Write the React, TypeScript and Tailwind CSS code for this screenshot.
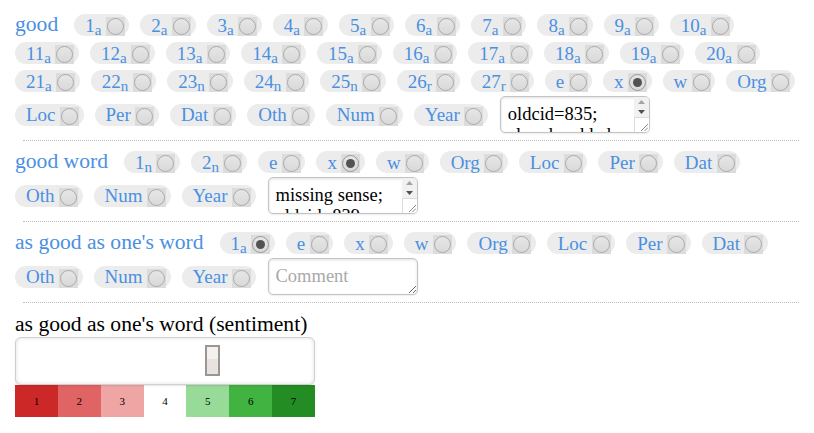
import React from "react";

const BLUE = "text-[#4a90e2]";

function Radio({ checked }: { checked?: boolean }) {
  return (
    <span className="ml-[4.5px] mt-[3px] flex h-[19px] w-[19px] shrink-0 items-center justify-center bg-[#dcdcdc]">
      <span
        className={
          "flex h-[17px] w-[17px] items-center justify-center rounded-full border bg-[linear-gradient(#e6e6e6,#d9d9d9)] " +
          (checked ? "border-[#999]" : "border-[#aaa]")
        }
      >
        {checked && <span className="h-[9px] w-[9px] rounded-full bg-[#525252]" />}
      </span>
    </span>
  );
}

function Pill({ label, sub, checked }: { label: string; sub?: string; checked?: boolean }) {
  return (
    <div className="flex h-[22px] shrink-0 items-center rounded-full bg-[#ececec] pl-[11px] pr-[4.5px]">
      <span className={"whitespace-nowrap text-[19px] leading-none " + BLUE}>
        {label}
        {sub && <sub className="text-[15px]">{sub}</sub>}
      </span>
      <Radio checked={checked} />
    </div>
  );
}

function Label({ text }: { text: string }) {
  return <span className={"mr-[5px] whitespace-nowrap text-[21.6px] leading-none " + BLUE}>{text}</span>;
}

function Row({ children }: { children: React.ReactNode }) {
  return <div className="flex min-h-[22px] items-center gap-x-[11px]">{children}</div>;
}

function Area({ value, placeholder, scroll }: { value?: string; placeholder?: string; scroll?: boolean }) {
  return (
    <div className="relative ml-[1px] h-[37px] w-[150px] shrink-0">
      <textarea
        defaultValue={value}
        placeholder={placeholder}
        className={
          "block h-[37px] w-[150px] rounded-[5px] border border-[#c4c4c4] bg-white pl-[7px] pt-[7px] font-['Liberation_Serif','Times_New_Roman',serif] text-[18.5px] leading-[21px] text-black shadow-[inset_0_1px_3px_rgba(0,0,0,0.12),0_1px_2px_rgba(0,0,0,0.08)] outline-none placeholder:text-[#a9a9a9] " +
          (scroll ? "resize-none overflow-hidden pr-[18px]" : "pr-[8px]")
        }
      />
      {scroll && (
        <div className="pointer-events-none absolute bottom-[1px] right-[1px] top-[1px] flex w-[15px] flex-col overflow-hidden rounded-tr-[4px] rounded-br-[4px]">
          <div className="flex h-[10px] items-center justify-center bg-[#f1f1f1]">
            <svg width="7" height="4" viewBox="0 0 7 4">
              <path d="M0 4 L3.5 0 L7 4 Z" fill="#a3a3a3" />
            </svg>
          </div>
          <div className="flex h-[10px] items-center justify-center bg-[#f1f1f1]">
            <svg width="7" height="4" viewBox="0 0 7 4">
              <path d="M0 0 L7 0 L3.5 4 Z" fill="#505050" />
            </svg>
          </div>
          <div className="relative flex-1 border-l border-t border-[#dcdcdc] bg-white">
            <svg className="absolute bottom-[1px] right-[1px]" width="8" height="8" viewBox="0 0 8 8">
              <path d="M1 8 L8 1 M4.5 8 L8 4.5" stroke="#8a8a8a" strokeWidth="1" />
            </svg>
          </div>
        </div>
      )}
    </div>
  );
}

function Sep() {
  return <div className="mb-[10px] ml-[8px] mt-[7px] border-t border-dotted border-[#bdbdbd]" />;
}

const extra = ["Org", "Loc", "Per", "Dat"];

export default function App() {
  const row1 = Array.from({ length: 10 }, (_, i) => i + 1);
  const row2 = Array.from({ length: 10 }, (_, i) => i + 11);
  const row3: [string, string][] = [
    ["21", "a"],
    ["22", "n"],
    ["23", "n"],
    ["24", "n"],
    ["25", "n"],
    ["26", "r"],
    ["27", "r"],
  ];
  const colors = ["bg-[#cc2828]", "bg-[#e16464]", "bg-[#f0a5a5]", "bg-white", "bg-[#98da98]", "bg-[#41b341]", "bg-[#238c23]"];
  return (
    <div className="min-h-[433px] w-[814px] bg-white px-[15px] pt-[14px] font-['Liberation_Serif','Times_New_Roman',serif]">
      {/* Section 1 */}
      <div className="flex flex-col">
        <Row>
          <Label text="good" />
          {row1.map((n) => (
            <Pill key={n} label={String(n)} sub="a" />
          ))}
        </Row>
        <div className="mt-[6px]">
          <Row>
            {row2.map((n) => (
              <Pill key={n} label={String(n)} sub="a" />
            ))}
          </Row>
        </div>
        <div className="mt-[6px]">
          <Row>
            {row3.map(([n, s]) => (
              <Pill key={n} label={n} sub={s} />
            ))}
            <Pill label="e" />
            <Pill label="x" checked />
            <Pill label="w" />
            <Pill label="Org" />
          </Row>
        </div>
        <div className="mt-[4px]">
          <Row>
            <Pill label="Loc" />
            <Pill label="Per" />
            <Pill label="Dat" />
            <Pill label="Oth" />
            <Pill label="Num" />
            <Pill label="Year" />
            <Area value={"oldcid=835;\nalready added"} scroll />
          </Row>
        </div>
      </div>
      <Sep />

      {/* Section 2 */}
      <div className="flex flex-col">
        <Row>
          <Label text="good word" />
          <Pill label="1" sub="n" />
          <Pill label="2" sub="n" />
          <Pill label="e" />
          <Pill label="x" checked />
          <Pill label="w" />
          {extra.map((t) => (
            <Pill key={t} label={t} />
          ))}
        </Row>
        <div className="mt-[4px]">
          <Row>
            <Pill label="Oth" />
            <Pill label="Num" />
            <Pill label="Year" />
            <Area value={"missing sense;\noldcid=839"} scroll />
          </Row>
        </div>
      </div>
      <Sep />

      {/* Section 3 */}
      <div className="flex flex-col">
        <Row>
          <Label text="as good as one's word" />
          <Pill label="1" sub="a" checked />
          <Pill label="e" />
          <Pill label="x" />
          <Pill label="w" />
          {extra.map((t) => (
            <Pill key={t} label={t} />
          ))}
        </Row>
        <div className="mt-[4px]">
          <Row>
            <Pill label="Oth" />
            <Pill label="Num" />
            <Pill label="Year" />
            <Area placeholder="Comment" />
          </Row>
        </div>
      </div>
      <Sep />

      {/* Section 4 */}
      <div className="text-[21.6px] leading-[23px] text-black">as good as one's word (sentiment)</div>
      <div className="relative mt-[1px] h-[48px] w-[300px] rounded-[6px] border border-[#cfcfcf] bg-white shadow-[inset_0_0_4px_rgba(0,0,0,0.12),0_1px_2px_rgba(0,0,0,0.1)]">
        <div className="absolute left-[189px] top-[7px] h-[31px] w-[15px] border-2 border-[#9b968f] bg-[linear-gradient(#f4f2ef_0%,#f4f2ef_45%,#e8e3de_45%,#e8e3de_100%)]" />
      </div>
      <div className="grid h-[32px] w-[300px] grid-cols-7">
        {colors.map((c, i) => (
          <div key={i} className={"flex items-center justify-center text-[11px] text-black " + c}>
            {i + 1}
          </div>
        ))}
      </div>
    </div>
  );
}
